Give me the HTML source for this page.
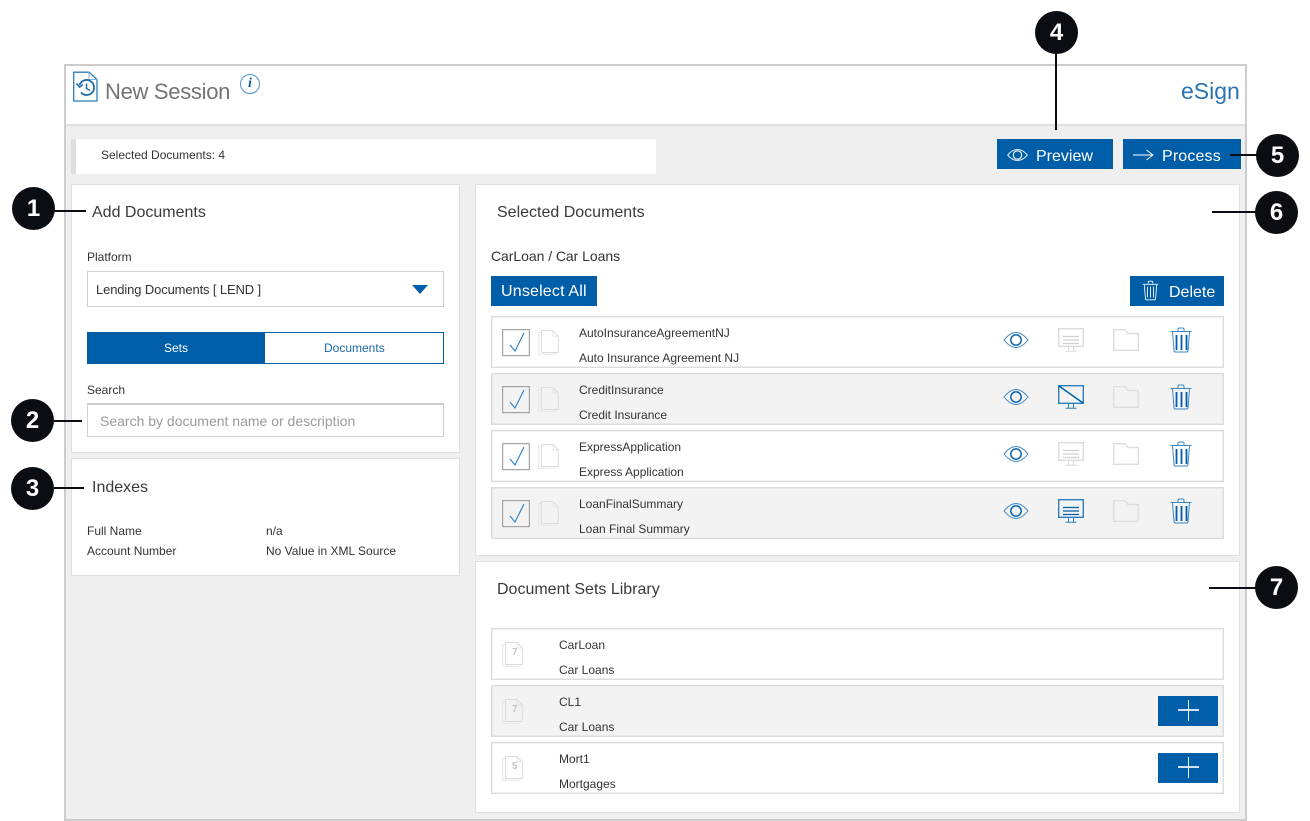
<!DOCTYPE html>
<html lang="en"><head><meta charset="utf-8"><title>New Session</title>
<style>
html,body{margin:0;padding:0;background:#fff}
body{width:1310px;height:821px;position:relative;overflow:hidden;font-family:"Liberation Sans",sans-serif;color:#333}
div,span.t,svg{position:absolute;box-sizing:border-box}
.t{white-space:nowrap;line-height:16px}
.s12{font-size:12px}
.h{font-size:16px;color:#3a3a3a;line-height:20px}
.panel{background:#fff;border:1px solid #e0e0e0}
.row{left:491px;width:733px;height:52px;border:1px solid #dcdcdc;box-shadow:inset 0 0 0 1px #f0f0f0;background:#fff}
.alt{background:#f3f3f3;box-shadow:inset 0 0 0 1px #e8e8e8}
.btn{background:#005ea8;color:#fff}
.c{width:43px;height:43px;border-radius:50%;background:#0a0e12;color:#fff;font-weight:bold;font-size:24px;line-height:43px;text-align:center}
.l{background:#0a0e12}
.input{background:#fff;border:2px solid #d0d0d0}
</style></head>
<body>
<svg width="0" height="0" style="left:0;top:0">
<defs>
<symbol id="eye" viewBox="0 0 26 18"><path d="M1 9C5 4 9 1.500 13 1.500s8 2.500 12 7.500c-4 5-8 7.500-12 7.500S5 14 1 9Z" fill="none" stroke="#3d86c4" stroke-width="1"/><circle cx="13" cy="9" r="5.200" fill="none" stroke="#005ea8" stroke-width="1.400"/></symbol>
<symbol id="trash" viewBox="0 0 22 26"><path d="M.500 4.500H21.500M8 4V2.500Q8 1 9.500 1h3Q14 1 14 2.500V4M2.500 5l1.500 18.500q.2 1.500 1.500 1.500h11q1.300 0 1.500-1.500L19.500 5" fill="none" stroke="#3d86c4" stroke-width="1"/><path d="M6.500 8V23M11.500 8V23M16.500 8V23" stroke="#005ea8" stroke-width="1.800"/></symbol>
<symbol id="folder" viewBox="0 0 26 22"><path d="M.700 21.300V.700H12L15 4.500H25.300V21.300Z" fill="none" stroke="#dedede" stroke-width="1.400"/></symbol>
<symbol id="doc" viewBox="0 0 21 26"><path d="M3.500 3.500H.700V25.300H18V23.500" fill="none" stroke="#e6e6e6"/><path d="M3.500 1.500H15L20.300 7V23.500H3.500Z" fill="none" stroke="#dcdcdc"/><path d="M15 1.500V7H20.300" fill="none" stroke="#e6e6e6"/></symbol>
<symbol id="check" viewBox="0 0 28 28"><rect x=".600" y=".600" width="26.800" height="26" fill="none" stroke="#a4a4a4" stroke-width="1.200"/><path d="M8 16l5 6L22 4" fill="none" stroke="#2a7fc8" stroke-width="1.100"/></symbol>
<symbol id="mon" viewBox="0 0 26 24"><rect x=".700" y=".700" width="24.600" height="17.600" fill="none" stroke="currentColor" stroke-width="1.400"/><path d="M10.500 19v4M15.500 19v4M7.500 23.300H18.500" fill="none" stroke="currentColor"/></symbol>
</defs>
</svg>

<!-- frame -->
<div style="left:64px;top:64px;width:1183px;height:757px;border:2px solid #cdcdcd;background:#efefef"></div>
<div style="left:66px;top:66px;width:1179px;height:60px;background:#fff;border-bottom:2px solid #dfdfdf"></div>

<svg style="left:73px;top:71px" width="25" height="31" viewBox="0 0 25 31"><path d="M.700 1.200H16L24 8.500V30H.700Z" fill="none" stroke="#2c7fbd" stroke-width="1.300"/><path d="M16 1.200V8.500H24" fill="none" stroke="#7fb2d8"/><path d="M6.500 14A7.500 7.500 0 1 1 8 21.500" fill="none" stroke="#1f6ea8" stroke-width="1.800"/><path d="M3.500 12.500L6.500 16 10 13.500" fill="none" stroke="#1f6ea8" stroke-width="1.600"/><path d="M13.500 12.500V17.500L17 19.500" fill="none" stroke="#1f6ea8" stroke-width="1.500"/></svg>
<span class="t" style="left:105px;top:79px;font-size:22px;letter-spacing:-.3px;line-height:26px;color:#747474">New Session</span>
<div style="left:240px;top:74px;width:20px;height:20px;border:1.500px solid #4c93cb;border-radius:50%;color:#005ea8;font:italic bold 14px/17px 'Liberation Serif',serif;text-align:center">i</div>
<span class="t" style="left:1181px;top:77px;font-size:23px;line-height:28px;color:#2a74b4">eSign</span>

<!-- selected bar -->
<div style="left:71px;top:139px;width:585px;height:35px;background:#fff;border-left:5px solid #dedede"></div>
<span class="t s12" style="left:101px;top:147px">Selected Documents: 4</span>

<!-- buttons -->
<div class="btn" style="left:997px;top:139px;width:116px;height:30px"></div>
<svg style="left:1007px;top:148px" width="21" height="14" viewBox="0 0 21 14"><path d="M.700 7C4 3 7 1.500 10.500 1.500S17 3 20.300 7C17 11 14 12.500 10.500 12.500S4 11 .700 7Z" fill="none" stroke="#dcebf6"/><circle cx="10.500" cy="7" r="4.200" fill="none" stroke="#fff" stroke-width="1.100"/></svg>
<span class="t" style="left:1036px;top:149px;font-size:16px;color:#fff">Preview</span>
<div class="btn" style="left:1123px;top:139px;width:118px;height:30px"></div>
<svg style="left:1133px;top:148px" width="21" height="14" viewBox="0 0 21 14"><path d="M0 7H20M13.500 2L20 7l-6.500 5" fill="none" stroke="#fff" stroke-width=".9"/></svg>
<span class="t" style="left:1162px;top:149px;font-size:16px;letter-spacing:.15px;color:#fff">Process</span>

<!-- left panels -->
<div class="panel" style="left:71px;top:184px;width:389px;height:269px"></div>
<span class="t h" style="left:92px;top:203px">Add Documents</span>
<span class="t s12" style="left:87px;top:249px">Platform</span>
<div class="input" style="left:87px;top:271px;width:357px;height:36px;border-width:1px"></div>
<span class="t" style="left:96px;top:282px;font-size:13px;letter-spacing:-.13px">Lending Documents [ LEND ]</span>
<svg style="left:412px;top:285px" width="16" height="9" viewBox="0 0 16 9"><path d="M0 0H16L8 9Z" fill="#005ea8"/></svg>
<div style="left:87px;top:332px;width:357px;height:32px;border:1px solid #005ea8;background:#fff"></div>
<div class="btn" style="left:87px;top:332px;width:178px;height:32px"></div>
<span class="t s12" style="left:164px;top:340px;color:#fff">Sets</span>
<span class="t s12" style="left:324px;top:340px;color:#1c6aa8">Documents</span>
<span class="t s12" style="left:87px;top:382px">Search</span>
<div class="input" style="left:87px;top:403px;width:357px;height:34px;border-width:2px 1px 1px"></div>
<span class="t" style="left:100px;top:413px;font-size:14px;color:#9b9b9b">Search by document name or description</span>

<div class="panel" style="left:71px;top:458px;width:389px;height:118px"></div>
<span class="t h" style="left:92px;top:478px">Indexes</span>
<span class="t s12" style="left:87px;top:523px">Full Name</span>
<span class="t s12" style="left:266px;top:523px">n/a</span>
<span class="t s12" style="left:87px;top:543px">Account Number</span>
<span class="t s12" style="left:266px;top:543px">No Value in XML Source</span>

<!-- selected documents -->
<div class="panel" style="left:475px;top:184px;width:765px;height:372px"></div>
<span class="t h" style="left:497px;top:203px">Selected Documents</span>
<span class="t" style="left:491px;top:248px;font-size:14px;letter-spacing:-.05px">CarLoan / Car Loans</span>
<div class="btn" style="left:491px;top:276px;width:106px;height:30px"></div>
<span class="t" style="left:501px;top:284px;font-size:16px;letter-spacing:.18px;color:#fff">Unselect All</span>
<div class="btn" style="left:1130px;top:276px;width:94px;height:30px"></div>
<svg style="left:1142px;top:280px" width="17" height="21" viewBox="0 0 22 26"><path d="M1 5H21M8 4V2.500Q8 1 9.500 1h3Q14 1 14 2.500V4M3 6l1.500 18q.2 1 1.200 1h10.600q1 0 1.200-1L19 6M7 8V22M11 8V22M15 8V22" fill="none" stroke="#fff" stroke-width="1.100"/></svg>
<span class="t" style="left:1169px;top:285px;font-size:16px;color:#fff">Delete</span>

<div class="row" style="top:316px"></div>
<svg style="left:502px;top:329px" width="28" height="28"><use href="#check"/></svg>
<svg style="left:538px;top:329px" width="21" height="26"><use href="#doc"/></svg>
<span class="t s12" style="left:579px;top:325px">AutoInsuranceAgreementNJ</span>
<span class="t s12" style="left:579px;top:350px">Auto Insurance Agreement NJ</span>
<svg style="left:1003px;top:331px" width="26" height="18"><use href="#eye"/></svg>
<svg style="left:1058px;top:328px;color:#dcdcdc" width="26" height="24"><use href="#mon"/></svg>
<svg style="left:1063px;top:335px" width="16" height="10"><path d="M0 1.500H16M0 5H16M0 8.500H16" stroke="#d0d0d0" stroke-width="1.300"/></svg>
<svg style="left:1113px;top:329px" width="26" height="22"><use href="#folder"/></svg>
<svg style="left:1170px;top:327px" width="22" height="26"><use href="#trash"/></svg>

<div class="row alt" style="top:373px"></div>
<svg style="left:502px;top:386px" width="28" height="28"><use href="#check"/></svg>
<svg style="left:538px;top:386px" width="21" height="26"><use href="#doc"/></svg>
<span class="t s12" style="left:579px;top:382px">CreditInsurance</span>
<span class="t s12" style="left:579px;top:407px">Credit Insurance</span>
<svg style="left:1003px;top:388px" width="26" height="18"><use href="#eye"/></svg>
<svg style="left:1058px;top:385px;color:#2c7fbd" width="26" height="24"><use href="#mon"/></svg>
<svg style="left:1058px;top:385px" width="26" height="19"><path d="M1 1L25 18" stroke="#005ea8" stroke-width="1.400"/></svg>
<svg style="left:1113px;top:386px" width="26" height="22"><use href="#folder"/></svg>
<svg style="left:1170px;top:384px" width="22" height="26"><use href="#trash"/></svg>

<div class="row" style="top:430px"></div>
<svg style="left:502px;top:443px" width="28" height="28"><use href="#check"/></svg>
<svg style="left:538px;top:443px" width="21" height="26"><use href="#doc"/></svg>
<span class="t s12" style="left:579px;top:439px">ExpressApplication</span>
<span class="t s12" style="left:579px;top:464px">Express Application</span>
<svg style="left:1003px;top:445px" width="26" height="18"><use href="#eye"/></svg>
<svg style="left:1058px;top:442px;color:#dcdcdc" width="26" height="24"><use href="#mon"/></svg>
<svg style="left:1063px;top:449px" width="16" height="10"><path d="M0 1.500H16M0 5H16M0 8.500H16" stroke="#d0d0d0" stroke-width="1.300"/></svg>
<svg style="left:1113px;top:443px" width="26" height="22"><use href="#folder"/></svg>
<svg style="left:1170px;top:441px" width="22" height="26"><use href="#trash"/></svg>

<div class="row alt" style="top:487px"></div>
<svg style="left:502px;top:500px" width="28" height="28"><use href="#check"/></svg>
<svg style="left:538px;top:500px" width="21" height="26"><use href="#doc"/></svg>
<span class="t s12" style="left:579px;top:496px">LoanFinalSummary</span>
<span class="t s12" style="left:579px;top:521px">Loan Final Summary</span>
<svg style="left:1003px;top:502px" width="26" height="18"><use href="#eye"/></svg>
<svg style="left:1058px;top:499px;color:#2c7fbd" width="26" height="24"><use href="#mon"/></svg>
<svg style="left:1063px;top:506px" width="16" height="10"><path d="M0 1.500H16M0 5H16M0 8.500H16" stroke="#005ea8" stroke-width="1.300"/></svg>
<svg style="left:1113px;top:500px" width="26" height="22"><use href="#folder"/></svg>
<svg style="left:1170px;top:498px" width="22" height="26"><use href="#trash"/></svg>

<!-- library -->
<div class="panel" style="left:475px;top:561px;width:765px;height:252px"></div>
<span class="t h" style="left:497px;top:580px">Document Sets Library</span>

<div class="row" style="top:628px"></div>
<svg style="left:502px;top:641px" width="21" height="26"><use href="#doc"/></svg>
<span class="t" style="left:512px;top:647px;font-size:10px;font-weight:bold;color:#c4c4c4;line-height:12px">7</span>
<span class="t s12" style="left:559px;top:637px">CarLoan</span>
<span class="t s12" style="left:559px;top:662px">Car Loans</span>

<div class="row alt" style="top:685px"></div>
<svg style="left:502px;top:698px" width="21" height="26"><use href="#doc"/></svg>
<span class="t" style="left:512px;top:704px;font-size:10px;font-weight:bold;color:#c4c4c4;line-height:12px">7</span>
<span class="t s12" style="left:559px;top:694px">CL1</span>
<span class="t s12" style="left:559px;top:719px">Car Loans</span>
<div class="btn" style="left:1158px;top:696px;width:60px;height:30px"></div>
<div style="left:1178px;top:709px;width:21px;height:2px;background:#cfe0ee"></div>
<div style="left:1188px;top:700px;width:1px;height:21px;background:#fff"></div>

<div class="row" style="top:742px"></div>
<svg style="left:502px;top:755px" width="21" height="26"><use href="#doc"/></svg>
<span class="t" style="left:512px;top:761px;font-size:10px;font-weight:bold;color:#c4c4c4;line-height:12px">5</span>
<span class="t s12" style="left:559px;top:751px">Mort1</span>
<span class="t s12" style="left:559px;top:776px">Mortgages</span>
<div class="btn" style="left:1158px;top:753px;width:60px;height:30px"></div>
<div style="left:1178px;top:766px;width:21px;height:2px;background:#cfe0ee"></div>
<div style="left:1188px;top:757px;width:1px;height:21px;background:#fff"></div>

<!-- callouts -->
<div class="l" style="left:54px;top:210px;width:32px;height:2px"></div>
<div class="l" style="left:54px;top:420px;width:28px;height:2px"></div>
<div class="l" style="left:54px;top:487px;width:30px;height:2px"></div>
<div class="l" style="left:1055px;top:40px;width:2px;height:90px"></div>
<div class="l" style="left:1230px;top:154px;width:30px;height:2px"></div>
<div class="l" style="left:1212px;top:211px;width:50px;height:2px"></div>
<div class="l" style="left:1209px;top:587px;width:50px;height:2px"></div>
<div class="c" style="left:12px;top:187px">1</div>
<div class="c" style="left:11px;top:399px">2</div>
<div class="c" style="left:11px;top:467px">3</div>
<div class="c" style="left:1035px;top:11px">4</div>
<div class="c" style="left:1256px;top:134px">5</div>
<div class="c" style="left:1255px;top:191px">6</div>
<div class="c" style="left:1255px;top:566px">7</div>
</body></html>
